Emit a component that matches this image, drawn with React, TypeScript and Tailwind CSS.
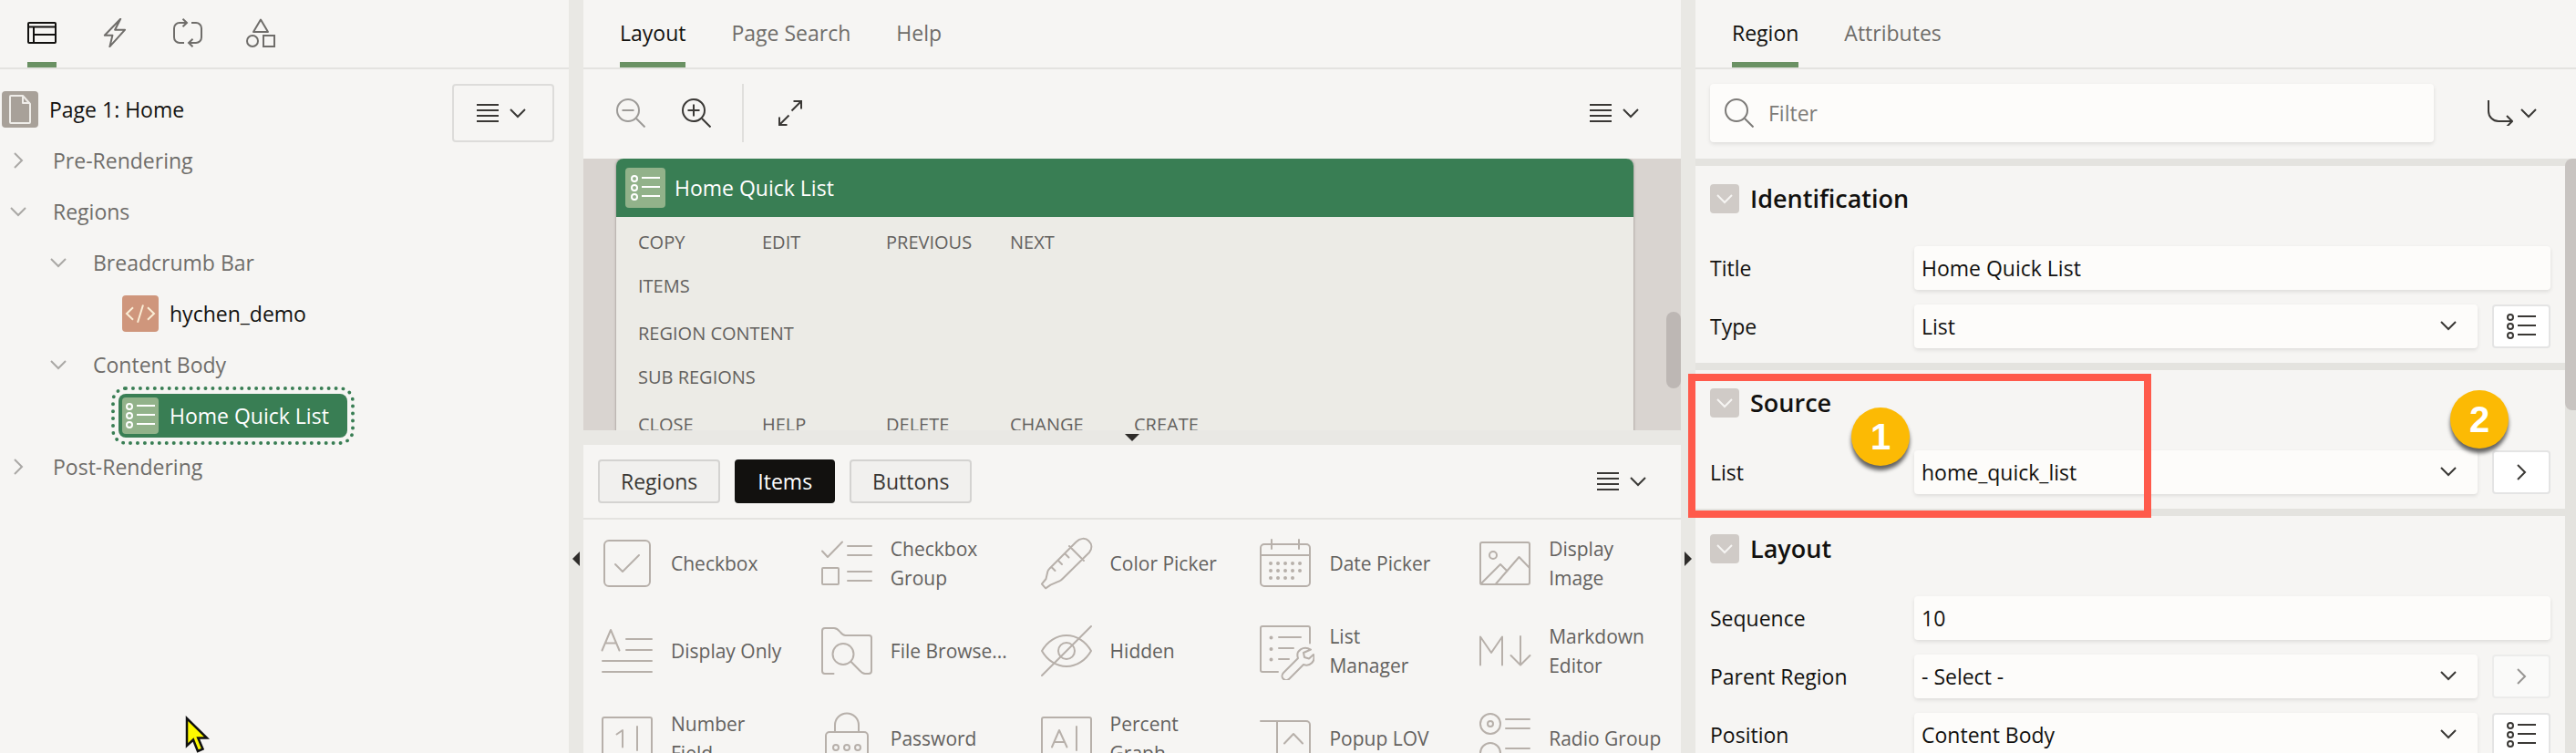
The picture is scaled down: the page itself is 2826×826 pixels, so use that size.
import type { ReactNode } from "react";

const THIN = { fill: "none", stroke: "currentColor", strokeWidth: 2 } as const;

function Svg({ size, className = "", children }: { size: 18 | 28 | 32 | 40 | 64; className?: string; children: ReactNode }) {
  return (
    <svg width={size} height={size} viewBox={`0 0 ${size} ${size}`} className={`shrink-0 ${className}`} aria-hidden="true" {...THIN}>
      {children}
    </svg>
  );
}

function ChevronDown({ className = "" }: { className?: string }) {
  return (
    <Svg size={18} className={className}>
      <path d="M1 5l8 8 8-8" />
    </Svg>
  );
}

function ChevronRight({ className = "" }: { className?: string }) {
  return (
    <Svg size={18} className={className}>
      <path d="M5 1l8 8-8 8" />
    </Svg>
  );
}

function Lines() {
  return (
    <svg width="24" height="24" viewBox="0 0 24 24" className="shrink-0" aria-hidden="true" {...THIN}>
      <path d="M0 3h24M0 9h24M0 15h24M0 21h24" />
    </svg>
  );
}

function ListIcon({ className = "" }: { className?: string }) {
  return (
    <Svg size={32} className={className}>
      <circle cx="4" cy="6" r="3" />
      <circle cx="4" cy="16" r="3" />
      <circle cx="4" cy="26" r="3" />
      <path d="M12 5h20M12 15h20M12 25h20" />
    </Svg>
  );
}

function Splitter({ direction }: { direction: "left" | "right" }) {
  return (
    <div className="w-4 shrink-0 bg-[#e9e8e4] pt-[604px]">
      <button type="button" aria-label={`Collapse ${direction} pane`} className="flex w-full justify-center text-[#2e2c2a]">
        <svg width="8" height="18" viewBox="0 0 8 18" fill="currentColor" aria-hidden="true">
          {direction === "left" ? <path d="M8 1v16L0 9z" /> : <path d="M0 1v16l8-8z" />}
        </svg>
      </button>
    </div>
  );
}

function TextTab({ label, active = false }: { label: string; active?: boolean }) {
  return (
    <button
      type="button"
      role="tab"
      aria-selected={active}
      className={
        active
          ? "border-b-6 border-[#6a9163] pt-1 text-[#12110f]"
          : "border-b-6 border-transparent pt-1 text-[#6f6d6a]"
      }
    >
      {label}
    </button>
  );
}

/* ---------- Left pane ---------- */

function TreePane() {
  return (
    <section className="relative w-[624px] shrink-0 overflow-hidden">
      <div role="tablist" className="flex h-[76px] gap-12 border-b-2 border-[#e4e3e0] px-[30px] text-[#6f6d6a]">
        <button type="button" role="tab" aria-label="Rendering" aria-selected="true" className="flex items-center border-b-6 border-[#6a9163] pt-1 text-[#12110f]">
          <Svg size={32}>
            <rect x="1" y="5" width="30" height="22" rx="1" />
            <path d="M1 9.500h30M7 9v18M7 18h24" />
          </Svg>
        </button>
        <button type="button" role="tab" aria-label="Dynamic Actions" className="flex items-center pb-0.5">
          <Svg size={32}>
            <path d="M22.200.8l-6.100 11.900h11L10.400 31.200l3-12.500H4.800z" strokeLinejoin="round" />
          </Svg>
        </button>
        <button type="button" role="tab" aria-label="Processing" className="flex items-center pb-0.5">
          <Svg size={32}>
            <path d="M12 27H7a6 6 0 0 1-6-6V11a6 6 0 0 1 6-6h8M10.500.7L15 5l-4.500 4.300M20 5h5a6 6 0 0 1 6 6v10a6 6 0 0 1-6 6h-8M21.500 22.700L17 27l4.500 4.300" />
          </Svg>
        </button>
        <button type="button" role="tab" aria-label="Page Shared Components" className="flex items-center pb-0.5">
          <Svg size={32}>
            <path d="M16 1.500L24 15H8z" strokeLinejoin="round" />
            <circle cx="7" cy="25" r="6" />
            <rect x="19" y="19" width="12" height="12" />
          </Svg>
        </button>
      </div>
      <div className="flex items-start justify-between pt-4 pr-4">
        <ul role="tree" className="text-[#6f6d6a]">
          <li role="treeitem" className="flex h-14 items-center pl-0.5 text-[#12110f]">
            <span className="mr-3 flex size-10 items-center justify-center rounded bg-[#a8a199] text-[#efede9]">
              <Svg size={40}>
                <path d="M23 5H10a1 1 0 0 0-1 1v28a1 1 0 0 0 1 1h20a1 1 0 0 0 1-1V14zM23 5v8h8" strokeLinejoin="round" />
              </Svg>
            </span>
            Page 1: Home
          </li>
          <li role="treeitem" className="flex h-14 items-center pl-[11px]">
            <ChevronRight className="mr-[29px] text-[#aaa8a5]" />
            Pre-Rendering
          </li>
          <li role="treeitem" className="flex h-14 items-center pl-[11px]">
            <ChevronDown className="mr-[29px] text-[#aaa8a5]" />
            Regions
          </li>
          <li role="treeitem" className="flex h-14 items-center pl-[55px]">
            <ChevronDown className="mr-[29px] text-[#aaa8a5]" />
            Breadcrumb Bar
          </li>
          <li role="treeitem" className="flex h-14 items-center pl-[134px] text-[#12110f]">
            <span className="mr-3 flex size-10 items-center justify-center rounded bg-[#cf967c] text-[#fbeed6]">
              <Svg size={40}>
                <path d="M12 13.300L5 20l7 6.700M28 13.300l7 6.700-7 6.700M23 10.500l-6 19.200" />
              </Svg>
            </span>
            hychen_demo
          </li>
          <li role="treeitem" className="flex h-14 items-center pl-[55px]">
            <ChevronDown className="mr-[29px] text-[#aaa8a5]" />
            Content Body
          </li>
          <li role="treeitem" aria-selected="true" className="flex h-14 items-center pl-[130px] text-white">
            <span className="flex h-12 items-center rounded-lg bg-[#397e54] pr-5 pl-1 outline-4 outline-offset-4 outline-[#397e54] outline-dotted">
              <span className="mr-3 flex size-10 items-center justify-center rounded bg-[#92b28a]">
                <ListIcon />
              </span>
              Home Quick List
            </span>
          </li>
          <li role="treeitem" className="flex h-14 items-center pl-[11px]">
            <ChevronRight className="mr-[29px] text-[#aaa8a5]" />
            Post-Rendering
          </li>
        </ul>
        <button type="button" aria-label="Tree menu" className="flex h-16 w-28 items-center justify-center gap-3 rounded border-2 border-[#dddcda] pr-1 text-[#3a3835]">
          <Lines />
          <ChevronDown />
        </button>
      </div>
      <svg className="absolute top-[785px] left-[202px]" width="28" height="42" viewBox="0 0 28 42" aria-hidden="true">
        <path d="M3 3v30l7-6.500 5 12.500 5.500-2.300-5.200-12.200H25z" fill="#fdf900" stroke="#111" strokeWidth="2.500" />
      </svg>
    </section>
  );
}

/* ---------- Middle pane ---------- */

const SLOT_ROWS = [
  ["COPY", "EDIT", "PREVIOUS", "NEXT"],
  ["ITEMS"],
  ["REGION CONTENT"],
  ["SUB REGIONS"],
  ["CLOSE", "HELP", "DELETE", "CHANGE", "CREATE"],
];

/* A line break in a label is where it wraps in its tile. */
const GALLERY: { label: string; icon: ReactNode }[] = [
  {
    label: "Checkbox",
    icon: (
      <>
        <rect x="7" y="7" width="50" height="50" rx="5" />
        <path d="M19 33l8 8 18-18" />
      </>
    ),
  },
  {
    label: "Checkbox\nGroup",
    icon: (
      <>
        <path d="M5 18.500l6 6.500L27 8.500M33 13h26M33 23h26M33 41h26M33 51h26" />
        <rect x="5" y="37" width="18" height="18" rx="1" />
      </>
    ),
  },
  {
    label: "Color Picker",
    icon: (
      <path d="M57 20L28.600 48c-2 2.200-3 3.200-5 3.700L14.500 55.700 9.100 59.300 4.900 54.700 9.500 49l1.900-8.300c.6-1.900 1.200-2.200 2.700-3.700L42.800 8.300c4-4.200 10-4.600 13.500-1 4 3.800 4 8.700.7 12.700zM35 13l16 16M31 22l3.500 3.500M23.500 29.500L27 33M16 36.500l3.500 3.500" />
    ),
  },
  {
    label: "Date Picker",
    icon: (
      <>
        <rect x="5" y="11" width="54" height="46" rx="4" />
        <path d="M5 23h54M17 6v10M47 6v10" />
        <path d="M16 32h.01M24 32h.01M32 32h.01M40 32h.01M48 32h.01M16 40h.01M24 40h.01M32 40h.01M40 40h.01M48 40h.01M16 48h.01M24 48h.01M32 48h.01M40 48h.01" strokeWidth="4" />
      </>
    ),
  },
  {
    label: "Display\nImage",
    icon: (
      <>
        <rect x="5" y="9" width="54" height="46" rx="2" />
        <circle cx="19" cy="23" r="4" />
        <path d="M5.500 54.500L27 33l7.500 7.500M22 54.500L47.500 25 59 37" />
      </>
    ),
  },
  {
    label: "Display Only",
    icon: <path d="M4.500 31.500L14 9l9.500 22.500M8 23.500h12M31 19h28M31 31h28M5 43h54M5 55h54" />,
  },
  {
    label: "File Browse...",
    icon: (
      <>
        <path d="M17.500 57H8a3 3 0 0 1-3-3V10a3 3 0 0 1 3-3h10c3 0 4.500 1.500 6.500 4s3 4 6 4h26a2.500 2.500 0 0 1 2.500 2.500V54a3 3 0 0 1-3 3h-4c-2.500 0-4-1.200-5.700-3.300L36.500 43.700" />
        <circle cx="28" cy="35.500" r="11.500" />
      </>
    ),
  },
  {
    label: "Hidden",
    icon: (
      <>
        <path d="M5 32c6-10.500 16-17 27-17s21 6.500 27 17c-6 10.500-16 17-27 17S11 42.500 5 32zM5 59L59 5" />
        <circle cx="32" cy="32" r="9" />
      </>
    ),
  },
  {
    label: "List\nManager",
    icon: (
      <>
        <path d="M24 55H7a2 2 0 0 1-2-2V7a2 2 0 0 1 2-2h50a2 2 0 0 1 2 2v16.500M25 17h24M25 29h16M25 41h11" />
        <path d="M16.500 17.500h.01M16.500 30h.01M16.500 41.500h.01" strokeWidth="4" />
        <path d="M60 30.500c-8-4.500-17 1-14 9.500L30 56c-4.500 5 2 11 6.500 6.500L52 47c7 2.500 13.500-3.500 11-11l-5 4.500-5-1.500-1-5z" />
      </>
    ),
  },
  {
    label: "Markdown\nEditor",
    icon: <path d="M5 47.500v-31L17 34l12-17.500v31M49 16v31M38.500 37L49 47.500 59.500 37" />,
  },
  {
    label: "Number\nField",
    icon: (
      <>
        <rect x="5" y="9" width="54" height="46" rx="2" />
        <path d="M20.500 27.500l6.500-4.500v18.500M43 19v26" />
      </>
    ),
  },
  {
    label: "Password",
    icon: (
      <>
        <path d="M19 25v-7.500a13 13 0 0 1 26 0V25" />
        <rect x="9" y="25" width="46" height="34" rx="4" />
        <circle cx="20" cy="42" r="3" />
        <circle cx="32" cy="42" r="3" />
        <circle cx="44" cy="42" r="3" />
      </>
    ),
  },
  {
    label: "Percent\nGraph",
    icon: (
      <>
        <rect x="5" y="9" width="54" height="46" rx="2" />
        <path d="M16 41.500L24 23l8.500 18.500M19 36h10.500M43 19v26" />
      </>
    ),
  },
  {
    label: "Popup LOV",
    icon: <path d="M5 13h50a4 4 0 0 1 4 4v40M23 13v44M31 37.500L41 27l10 10.500" />,
  },
  {
    label: "Radio Group",
    icon: (
      <>
        <circle cx="16" cy="16" r="11" />
        <circle cx="16" cy="16" r="3" />
        <circle cx="16" cy="48" r="11" />
        <path d="M33 11h26M33 21h26M33 43h26M33 53h26" />
      </>
    ),
  },
];

function MenuButton({ label }: { label: string }) {
  return (
    <button type="button" aria-label={label} className="flex items-center gap-3 text-[#3a3835]">
      <Lines />
      <ChevronDown />
    </button>
  );
}

function LayoutPane() {
  return (
    <section className="flex min-w-0 flex-1 flex-col">
      <div role="tablist" className="flex h-[76px] shrink-0 gap-[50px] border-b-2 border-[#e4e3e0] px-10">
        <TextTab label="Layout" active />
        <TextTab label="Page Search" />
        <TextTab label="Help" />
      </div>
      <div className="flex h-[98px] shrink-0 items-center pr-[46px] pb-0.5 pl-9 text-[#3a3835]">
        <button type="button" aria-label="Zoom Out" disabled className="mr-10 text-[#9c9a97]">
          <Svg size={32}>
            <circle cx="13" cy="13" r="12" />
            <path d="M6.500 13h13M22 22l9.500 9.500" />
          </Svg>
        </button>
        <button type="button" aria-label="Zoom In" className="mr-[34px]">
          <Svg size={32}>
            <circle cx="13" cy="13" r="12" />
            <path d="M6.500 13h13M13 6.500v13M22 22l9.500 9.500" />
          </Svg>
        </button>
        <span className="mr-[34px] h-16 w-0.5 bg-[#e0dfdc]" />
        <button type="button" aria-label="Expand">
          <Svg size={32}>
            <path d="M20.500 3H29v8.500M29 3L18.500 13.500M13.500 29H5v-8.500M5 29l10.500-10.500" />
          </Svg>
        </button>
        <span className="flex-1" />
        <MenuButton label="Layout menu" />
      </div>

      <div className="relative h-[298px] shrink-0 overflow-hidden bg-[#d9d4d0] pr-[52px] pl-9">
        <article className="rounded-t-lg bg-[#ecebe6] pb-10 shadow-[0_0_2px_1px_rgba(90,80,75,0.3)]">
          <h2 className="flex h-16 items-center gap-2.5 rounded-t-lg bg-[#397e54] px-2.5 text-white">
            <span className="flex size-11 items-center justify-center rounded bg-[#92b28a]">
              <ListIcon />
            </span>
            Home Quick List
          </h2>
          <div className="flex flex-col gap-6 px-6 pt-4 text-[20px] leading-6 text-[#63615e]">
            {SLOT_ROWS.map((row) => (
              <div key={row[0]} className="flex even:mb-1">
                {row.map((slot) => (
                  <span key={slot} className="w-[136px] whitespace-nowrap">
                    {slot}
                  </span>
                ))}
              </div>
            ))}
          </div>
        </article>
        <span className="absolute top-[168px] right-0 h-[84px] w-4 rounded-full bg-[#bdb7b4]" />
      </div>

      <div className="flex h-4 shrink-0 items-center justify-center bg-[#e9e8e4]">
        <button type="button" aria-label="Collapse gallery" className="text-[#2e2c2a]">
          <svg width="16" height="8" viewBox="0 0 16 8" fill="currentColor" aria-hidden="true" className="block">
            <path d="M0 0h16L8 8z" />
          </svg>
        </button>
      </div>

      <div className="flex h-[82px] shrink-0 items-center gap-4 border-b-2 border-[#e4e3e0] pr-[38px] pl-4 text-[#3a3835]">
        <button type="button" className="h-12 rounded border-2 border-[#d4d3d1] bg-[#f1f0ee] px-[23px]">
          Regions
        </button>
        <button type="button" className="h-12 rounded border-2 border-[#12110f] bg-[#12110f] px-[23px] text-white">
          Items
        </button>
        <button type="button" className="h-12 rounded border-2 border-[#d4d3d1] bg-[#f1f0ee] px-[23px]">
          Buttons
        </button>
        <span className="flex-1" />
        <MenuButton label="Gallery menu" />
      </div>

      <ul className="grid grid-cols-5 overflow-hidden text-[21px] text-[#63615e]">
        {GALLERY.map(({ label, icon }) => (
          <li key={label} className="flex h-24 items-center gap-4 pl-4 leading-8">
            <Svg size={64} className="text-[#b7b0aa]">
              <g strokeLinecap="round" strokeLinejoin="round">{icon}</g>
            </Svg>
            <span className="min-w-0 flex-1 whitespace-pre-line">{label}</span>
          </li>
        ))}
      </ul>
    </section>
  );
}

/* ---------- Right pane ---------- */

type Field = { label: string; value: string; kind: "text" | "select"; action?: "list" | "go" | "go-disabled" };

const SECTIONS: { title: string; fields: Field[] }[] = [
  {
    title: "Identification",
    fields: [
      { label: "Title", value: "Home Quick List", kind: "text" },
      { label: "Type", value: "List", kind: "select", action: "list" },
    ],
  },
  {
    title: "Source",
    fields: [{ label: "List", value: "home_quick_list", kind: "select", action: "go" }],
  },
  {
    title: "Layout",
    fields: [
      { label: "Sequence", value: "10", kind: "text" },
      { label: "Parent Region", value: "- Select -", kind: "select", action: "go-disabled" },
      { label: "Position", value: "Content Body", kind: "select", action: "list" },
    ],
  },
];

function FieldRow({ field }: { field: Field }) {
  const id = `field-${field.label.toLowerCase().replace(" ", "-")}`;
  const box = "h-12 w-full appearance-none rounded bg-[#fdfcfa] px-2 text-[#12110f] shadow-[0_2px_4px_rgba(0,0,0,0.1)]";
  return (
    <div className="flex h-12 items-center">
      <label htmlFor={id} className="w-56 shrink-0">
        {field.label}
      </label>
      {field.kind === "text" ? (
        <input id={id} type="text" defaultValue={field.value} className={box} />
      ) : (
        <div className="relative flex-1">
          <select id={id} defaultValue={field.value} className={`${box} block`}>
            <option>{field.value}</option>
          </select>
          <ChevronDown className="pointer-events-none absolute top-3.5 right-[23px] text-[#3a3835]" />
        </div>
      )}
      {field.action && (
        <button
          type="button"
          aria-label={`${field.label} details`}
          disabled={field.action === "go-disabled"}
          className="ml-4 flex h-12 w-16 shrink-0 items-center justify-center rounded border-2 border-[#e4e4e4] bg-white text-[#3a3835] disabled:opacity-50"
        >
          {field.action === "list" ? <ListIcon /> : <ChevronRight />}
        </button>
      )}
    </div>
  );
}

function PropertyPane() {
  return (
    <section className="relative flex w-[966px] shrink-0 flex-col">
      <div role="tablist" className="flex h-[76px] shrink-0 gap-[50px] border-b-2 border-[#e4e3e0] px-10">
        <TextTab label="Region" active />
        <TextTab label="Attributes" />
      </div>
      <div className="flex h-[98px] shrink-0 items-center justify-between pr-[43px] pb-0.5 pl-4">
        <label className="flex h-16 w-[794px] items-center gap-4 rounded bg-[#fdfcfa] px-4 text-[#7d7b78] shadow-[0_2px_4px_rgba(0,0,0,0.1)]">
          <Svg size={32}>
            <circle cx="13" cy="13" r="12" />
            <path d="M22 22l9.500 9.500" />
          </Svg>
          <input type="search" placeholder="Filter" aria-label="Filter" className="flex-1 bg-transparent outline-none placeholder:text-[#7d7b78]" />
        </label>
        <button type="button" aria-label="Go to group" className="flex items-center gap-2 text-[#3a3835]">
          <Svg size={28}>
            <path d="M1 0v12a11 11 0 0 0 11 11h15M21 17l6 6-6 6" />
          </Svg>
          <ChevronDown />
        </button>
      </div>
      <div className="flex min-h-0 flex-1 bg-[#e4e3df]">
        <div className="min-w-0 flex-1 overflow-hidden">
          {SECTIONS.map(({ title, fields }) => (
            <div key={title} className="border-t-8 border-[#e4e3df] bg-[#f6f5f3] px-4 pt-5 pb-4">
              <h3 className="mb-9 flex h-8 items-center gap-3 text-[27px] font-semibold">
                <button type="button" aria-label={`Collapse ${title}`} className="flex size-8 items-center justify-center rounded bg-[#d0cbc7] text-[#f6f5f3]">
                  <ChevronDown />
                </button>
                {title}
              </h3>
              <div className="flex flex-col gap-4">
                {fields.map((field) => (
                  <FieldRow key={field.label} field={field} />
                ))}
              </div>
            </div>
          ))}
        </div>
        <span className="h-[276px] w-3 shrink-0 rounded-l-lg bg-[#c8c4c1]" />
      </div>

      <div className="pointer-events-none absolute top-[410px] -left-2 h-[158px] w-[508px] border-8 border-[#ff5a4b]" />
      <span className="absolute top-[447px] left-[171px] flex size-16 items-center justify-center rounded-full bg-[#fcba04] font-['Liberation_Sans',sans-serif] text-[40px] font-bold text-white shadow-[0_5px_4px_rgba(0,0,0,0.6)]">
        1
      </span>
      <span className="absolute top-[428px] left-[828px] flex size-16 items-center justify-center rounded-full bg-[#fcba04] font-['Liberation_Sans',sans-serif] text-[40px] font-bold text-white shadow-[0_5px_4px_rgba(0,0,0,0.6)]">
        2
      </span>
    </section>
  );
}

export default function App() {
  return (
    <main className="flex h-screen overflow-hidden bg-[#f6f5f3] font-['Open_Sans','Noto_Sans',sans-serif] text-[23px] leading-8 text-[#12110f]">
      <TreePane />
      <Splitter direction="left" />
      <LayoutPane />
      <Splitter direction="right" />
      <PropertyPane />
    </main>
  );
}
